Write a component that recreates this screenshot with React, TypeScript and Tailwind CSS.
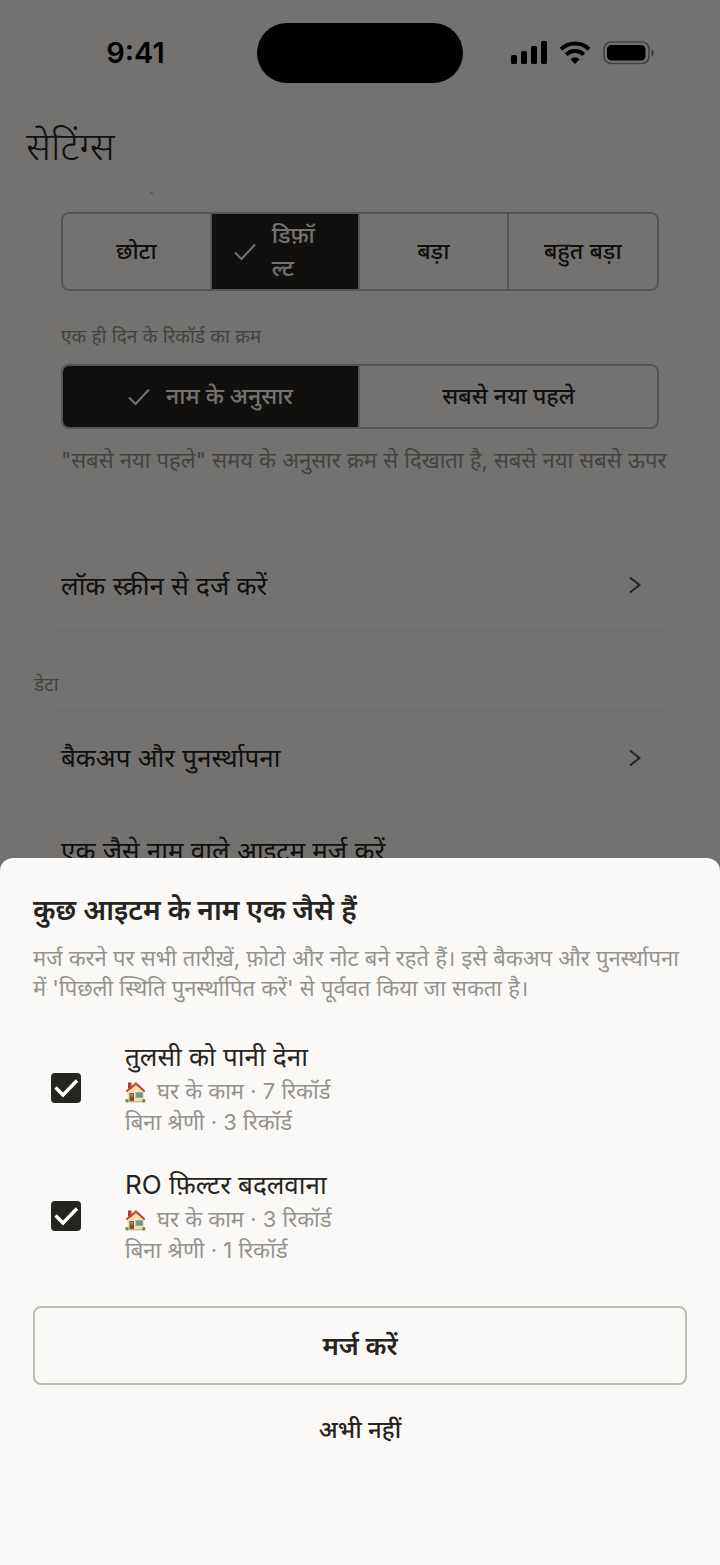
import React from "react";
import clsx from "clsx";

type Item = {
  id: string;
  name: string;
  category: string;
  records: string;
  uncategorized: string;
};

const sizes = [
  { id: "small", label: ["छोटा"] },
  { id: "default", label: ["डिफ़ॉ", "ल्ट"] },
  { id: "large", label: ["बड़ा"] },
  { id: "xlarge", label: ["बहुत बड़ा"] },
];

const orders = [
  { id: "name", label: ["नाम के अनुसार"] },
  { id: "newest", label: ["सबसे नया पहले"] },
];

const items: Item[] = [
  {
    id: "tulsi",
    name: "तुलसी को पानी देना",
    category: "घर के काम",
    records: "7 रिकॉर्ड",
    uncategorized: "बिना श्रेणी · 3 रिकॉर्ड",
  },
  {
    id: "ro",
    name: "RO फ़िल्टर बदलवाना",
    category: "घर के काम",
    records: "3 रिकॉर्ड",
    uncategorized: "बिना श्रेणी · 1 रिकॉर्ड",
  },
];

function StatusBar() {
  return (
    <div className="grid grid-cols-[1fr_206px_1fr] items-center pt-[23px]">
      <span className="pl-[14px] text-center text-[29px] leading-[60px] font-semibold text-black">
        9:41
      </span>
      <div className="h-[60px] rounded-full bg-black" />
      <div className="flex items-center justify-center gap-3 pr-[18px]">
        <svg width="36" height="24" viewBox="0 0 36 24" aria-hidden="true">
          <rect x="0" y="14" width="6" height="9" rx="1.5" />
          <rect x="10" y="10" width="6" height="13" rx="1.5" />
          <rect x="20" y="5" width="6" height="18" rx="1.5" />
          <rect x="30" y="0" width="6" height="23" rx="1.5" />
        </svg>
        <svg width="32" height="24" viewBox="0 0 32 24" aria-hidden="true">
          <g fill="none" stroke="#000" strokeWidth="4">
            <path d="M2 8.2a20 20 0 0 1 28 0" />
            <path d="M7.2 13.6a12.6 12.6 0 0 1 17.6 0" />
          </g>
          <path d="M16 23l-4.6-4.8a6.6 6.6 0 0 1 9.2 0z" />
        </svg>
        <svg width="51" height="24" viewBox="0 0 51 24" aria-hidden="true">
          <rect
            x="1"
            y="1"
            width="45"
            height="21.5"
            rx="7"
            fill="none"
            stroke="#000"
            strokeOpacity="0.4"
            strokeWidth="1.7"
          />
          <rect x="4" y="4" width="38.5" height="15.5" rx="4.5" />
          <path d="M48.4 8.4v7c1.4-.5 2.4-1.9 2.4-3.5s-1-3-2.4-3.5z" opacity="0.45" />
        </svg>
      </div>
    </div>
  );
}

function Segments({
  options,
  active,
  className,
}: {
  options: { id: string; label: string[] }[];
  active: string;
  className?: string;
}) {
  return (
    <div
      className={clsx(
        "grid auto-cols-fr grid-flow-col divide-x-2 divide-[#bbbab5] overflow-hidden rounded-lg border-2 border-[#bbbab5] text-[23px] leading-[33px] font-medium",
        className
      )}
    >
      {options.map(({ id, label }) => (
        <button
          key={id}
          type="button"
          aria-pressed={id === active}
          className={clsx(
            "flex items-center justify-center gap-4",
            id === active ? "bg-[#252420] text-[#faf9f7]" : "text-[#252420]"
          )}
        >
          {id === active && (
            <svg
              width="22"
              height="18"
              viewBox="0 0 22 18"
              fill="none"
              stroke="currentColor"
              strokeWidth="2"
              aria-hidden="true"
            >
              <path d="M1 9.5l6.5 6.5L21 1.5" />
            </svg>
          )}
          <span className={clsx("text-left", label.length > 1 && "w-[64px]")}>
            {label.map((line) => (
              <span key={line} className="block">
                {line}
              </span>
            ))}
          </span>
        </button>
      ))}
    </div>
  );
}

function Row({ label, chevron = true }: { label: string; chevron?: boolean }) {
  return (
    <button
      type="button"
      className="flex h-[92px] w-full items-center justify-between pr-[18px] text-left text-[26px] text-[#252420]"
    >
      {label}
      {chevron && (
        <svg
          width="12"
          height="18"
          viewBox="0 0 12 18"
          fill="none"
          stroke="#4c4b47"
          strokeWidth="2"
          aria-hidden="true"
        >
          <path d="M1 1.5L10.5 9L1 16.5" />
        </svg>
      )}
    </button>
  );
}

function House() {
  return (
    <svg width="21" height="22" viewBox="0 0 21 22" aria-hidden="true">
      <path d="M3 1.5h3.5v6H3z" fill="#a5403a" />
      <path d="M2.5 10L11 2.5l8 7.5v10.5h-16.5z" fill="#f3dfb4" />
      <path d="M11 1L.8 9.8l1.2 1.4L11 4l8 7.2 1.3-1.4z" fill="#b5443c" />
      <path d="M11 1l-4 3.5 5.5.8z" fill="#d0675a" />
      <rect x="4.5" y="12" width="4.5" height="8.5" fill="#8c4a2c" />
      <rect x="5.5" y="13" width="2.5" height="2.5" fill="#6f9fb5" />
      <rect x="11" y="11.5" width="6.5" height="5" fill="#5e97b4" stroke="#b99f75" strokeWidth="0.8" />
      <path d="M2 20.2h17v1.2H2z" fill="#c9b48a" />
      <circle cx="2" cy="19.8" r="1.7" fill="#6f8a3c" />
      <circle cx="18.8" cy="19.8" r="1.7" fill="#6f8a3c" />
    </svg>
  );
}

function MergeItem({ item }: { item: Item }) {
  return (
    <label className="flex items-center pl-[18px]">
      <span className="grid h-[30px] w-[30px] shrink-0">
        <input
          type="checkbox"
          defaultChecked
          className="col-start-1 row-start-1 h-[30px] w-[30px] appearance-none rounded-[4px] bg-[#252420]"
        />
        <svg
          className="pointer-events-none col-start-1 row-start-1"
          width="30"
          height="30"
          viewBox="0 0 30 30"
          fill="none"
          stroke="#fff"
          strokeWidth="3.5"
          aria-hidden="true"
        >
          <path d="M4.5 14.5l7.5 7.5L26 7.5" />
        </svg>
      </span>
      <span className="ml-11 text-[22px] leading-[31px] text-[#94938d]">
        <span className="block text-[26px] leading-[38px] text-[#252420]">
          {item.name}
        </span>
        <span className="flex items-center gap-[11px]">
          <House />
          <span>
            {item.category} · {item.records}
          </span>
        </span>
        <span className="block">{item.uncategorized}</span>
      </span>
    </label>
  );
}

function Settings() {
  return (
    <>
      <StatusBar />
      <h1 className="px-[26px] pt-[37px] text-[39px] leading-[52px] font-light text-[#252420]">
        सेटिंग्स
      </h1>
      <main className="mt-5 px-[34px]">
        <section className="rounded-b-[24px] border-x border-b border-[#efeeeb] px-[26px] pb-[22px]">
          <svg className="ml-[89px]" width="10" height="3" viewBox="0 0 10 3" aria-hidden="true">
            <path d="M0 .5l3 1.5" stroke="#8f8e88" />
          </svg>
          <Segments options={sizes} active="default" className="mt-[17px] h-[79px]" />
          <p className="mt-[31px] text-[19px] leading-[30px] text-[#94938d]">
            एक ही दिन के रिकॉर्ड का क्रम
          </p>
          <Segments options={orders} active="name" className="mt-3 h-[65px]" />
          <p className="mt-4 text-[22px] leading-[30px] whitespace-nowrap text-[#94938d]">
            "सबसे नया पहले" समय के अनुसार क्रम से दिखाता है, सबसे नया सबसे ऊपर
          </p>
        </section>
        <section className="mt-10 rounded-[24px] border border-[#efeeeb] px-[26px]">
          <Row label="लॉक स्क्रीन से दर्ज करें" />
        </section>
        <h2 className="mt-[38px] text-[19px] leading-[30px] text-[#94938d]">डेटा</h2>
        <section className="mt-[11px] divide-y divide-[#efeeeb] rounded-t-[24px] border-x border-t border-[#efeeeb] px-[26px]">
          <Row label="बैकअप और पुनर्स्थापना" />
          <Row label="एक जैसे नाम वाले आइटम मर्ज करें" chevron={false} />
        </section>
      </main>
    </>
  );
}

function MergeSheet() {
  return (
    <div
      role="dialog"
      aria-labelledby="merge-title"
      className="rounded-t-[13px] bg-[#faf9f7] px-[33px] pt-[33px] pb-[102px] text-[#252420]"
    >
      <h2 id="merge-title" className="text-[28px] leading-[38px] font-semibold">
        कुछ आइटम के नाम एक जैसे हैं
      </h2>
      <p className="mt-[14px] text-[22px] leading-[30px] text-[#94938d]">
        मर्ज करने पर सभी तारीख़ें, फ़ोटो और नोट बने रहते हैं। इसे बैकअप और पुनर्स्थापना
        में 'पिछली स्थिति पुनर्स्थापित करें' से पूर्ववत किया जा सकता है।
      </p>
      <div className="mt-[35px] flex flex-col gap-7">
        {items.map((item) => (
          <MergeItem key={item.id} item={item} />
        ))}
      </div>
      <button
        type="button"
        className="mt-10 h-[79px] w-full rounded-lg border-2 border-[#bbbab5] text-[26px] font-semibold"
      >
        मर्ज करें
      </button>
      <button type="button" className="mt-3 h-[66px] w-full text-[24px] font-medium">
        अभी नहीं
      </button>
    </div>
  );
}

export default function App() {
  return (
    <div
      lang="hi"
      className="relative min-h-screen overflow-hidden bg-[#faf9f7] font-['Inter','Noto_Sans_Devanagari','Noto_Sans',sans-serif]"
    >
      <Settings />
      <div className="absolute inset-0 flex flex-col justify-end bg-black/54">
        <MergeSheet />
      </div>
    </div>
  );
}
